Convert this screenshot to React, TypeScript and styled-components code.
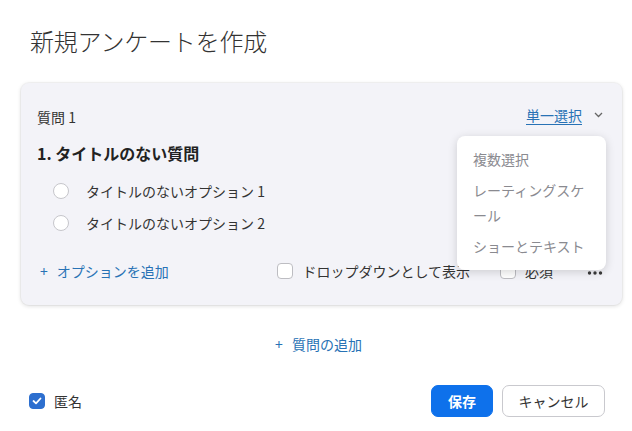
import React from "react";
import styled, { createGlobalStyle } from "styled-components";

const Global = createGlobalStyle`
  html, body { margin: 0; padding: 0; background: #fff; }
  body {
    font-family: "Noto Sans CJK JP", "Noto Sans", sans-serif;
    color: #232333;
    -webkit-font-smoothing: antialiased;
  }
  * { box-sizing: border-box; }
`;

const Page = styled.div`
  width: 632px;
  height: 431px;
  display: flex;
  flex-direction: column;
  overflow: hidden;
`;

const Title = styled.h1`
  margin: 24px 0 0 30px;
  font-size: 24px;
  line-height: 34px;
  font-weight: 300;
  color: #333;
  letter-spacing: -0.2px;
`;

const Card = styled.section`
  position: relative;
  margin: 25px 10px 0 21px;
  height: 222px;
  background: #f3f3f8;
  border-radius: 8px;
  box-shadow: 0 1px 4px rgba(0, 0, 0, 0.14), 0 0 0 1px rgba(0, 0, 0, 0.03);
  padding: 24px 19px 22px 16px;
  display: flex;
  flex-direction: column;
`;

const HeaderRow = styled.div`
  display: flex;
  align-items: center;
  justify-content: space-between;
  height: 20px;
`;

const Label = styled.span`
  font-size: 14px;
  line-height: 20px;
  color: #333;
`;

const TypeLink = styled.button`
  all: unset;
  display: flex;
  align-items: center;
  gap: 12px;
  margin-top: -4px;
  cursor: pointer;
`;

const TypeText = styled.span`
  font-size: 14px;
  line-height: 20px;
  color: #2872b5;
  text-decoration: underline;
  text-underline-offset: 3px;
`;

const QuestionTitle = styled.h2`
  margin: 14px 0 0;
  font-size: 16px;
  line-height: 24px;
  font-weight: 700;
  color: #222;
`;

const Options = styled.ul`
  list-style: none;
  margin: 10px 0 0;
  padding: 0 0 0 16px;
`;

const OptionRow = styled.li`
  display: flex;
  align-items: center;
  height: 32px;
  gap: 17px;
`;

const Radio = styled.span`
  width: 16px;
  height: 16px;
  border-radius: 50%;
  border: 1px solid #c6c6cb;
  background: #fff;
  flex: none;
`;

const OptionText = styled.span`
  font-size: 14px;
  color: #333;
`;

const FooterRow = styled.div`
  display: flex;
  align-items: center;
  margin-top: 20px;
  height: 24px;
`;

const AddLink = styled.button<{ $center?: boolean }>`
  all: unset;
  display: flex;
  align-items: center;
  flex: ${(p) => (p.$center ? "none" : "1")};
  font-size: 14px;
  line-height: 20px;
  color: #2872b5;
  cursor: pointer;
  white-space: nowrap;
`;

const Plus = styled.span`
  margin: 0 9px 0 3px;
`;

const CheckLabel = styled.label<{ $gapAfter?: number }>`
  display: flex;
  align-items: center;
  gap: 9px;
  margin-right: ${(p) => p.$gapAfter ?? 0}px;
  font-size: 14px;
  color: #333;
`;

const Box = styled.span<{ $checked?: boolean }>`
  width: 16px;
  height: 16px;
  border-radius: 4px;
  flex: none;
  display: flex;
  align-items: center;
  justify-content: center;
  border: 1px solid ${(p) => (p.$checked ? "#2d6fcf" : "#bdbdc2")};
  background: ${(p) => (p.$checked ? "#2d6fcf" : "#fff")};
`;

const MoreButton = styled.button`
  all: unset;
  display: flex;
  align-items: center;
  width: 16px;
  height: 10px;
  margin-top: 3px;
`;

const Menu = styled.ul`
  position: absolute;
  top: 53px;
  left: 436px;
  width: 149px;
  margin: 0;
  padding: 8px 0;
  list-style: none;
  background: #fff;
  border-radius: 8px;
  box-shadow: 0 2px 10px rgba(0, 0, 0, 0.16);
  z-index: 5;
`;

const MenuItem = styled.li`
  padding: 3px 16px;
  font-size: 14px;
  line-height: 25px;
  color: #8a8a90;
  line-break: loose;
  word-break: break-all;
`;

const AddQuestion = styled.div`
  display: flex;
  justify-content: center;
  margin-top: 29px;
  padding-left: 2px;
`;

const Footer = styled.footer`
  display: flex;
  align-items: center;
  margin-top: 31px;
  padding: 0 27px 0 29px;
  height: 32px;
`;

const Spacer = styled.div`
  flex: 1;
`;

const Button = styled.button<{ $primary?: boolean }>`
  height: 32px;
  padding: 0 ${(p) => (p.$primary ? 16 : 15)}px;
  min-width: ${(p) => (p.$primary ? 61 : 103)}px;
  border-radius: 7px;
  font-family: inherit;
  font-size: 14px;
  font-weight: ${(p) => (p.$primary ? 700 : 400)};
  color: ${(p) => (p.$primary ? "#fff" : "#333")};
  background: ${(p) => (p.$primary ? "#0e71eb" : "#fff")};
  border: 1px solid ${(p) => (p.$primary ? "#0e71eb" : "#c9c9ce")};
  margin-left: ${(p) => (p.$primary ? 0 : 9)}px;
`;

const Chevron = () => (
  <svg width="9" height="6" viewBox="0 0 9 6">
    <polyline points="1,1 4.5,4.5 8,1" fill="none" stroke="#666" strokeWidth="1.3" />
  </svg>
);

const Dots = () => (
  <svg width="16" height="6" viewBox="0 0 16 6">
    <circle cx="2.5" cy="3" r="1.7" fill="#3a3a3a" />
    <circle cx="8" cy="3" r="1.7" fill="#3a3a3a" />
    <circle cx="13.5" cy="3" r="1.7" fill="#3a3a3a" />
  </svg>
);

const Check = () => (
  <svg width="10" height="8" viewBox="0 0 10 8">
    <polyline points="1.5,4 4,6.3 8.5,1.5" fill="none" stroke="#fff" strokeWidth="1.8" strokeLinecap="round" strokeLinejoin="round" />
  </svg>
);

export default function App() {
  const options = ["タイトルのないオプション 1", "タイトルのないオプション 2"];
  const menu = ["複数選択", "レーティングスケール", "ショーとテキスト"];
  return (
    <Page>
      <Global />
      <Title>新規アンケートを作成</Title>
      <Card>
        <HeaderRow>
          <Label>質問 1</Label>
          <TypeLink>
            <TypeText>単一選択</TypeText>
            <Chevron />
          </TypeLink>
        </HeaderRow>
        <QuestionTitle>1.&nbsp;タイトルのない質問</QuestionTitle>
        <Options>
          {options.map((o) => (
            <OptionRow key={o}>
              <Radio />
              <OptionText>{o}</OptionText>
            </OptionRow>
          ))}
        </Options>
        <FooterRow>
          <AddLink>
            <Plus>+</Plus>オプションを追加
          </AddLink>
          <CheckLabel $gapAfter={30}>
            <Box />
            ドロップダウンとして表示
          </CheckLabel>
          <CheckLabel $gapAfter={34}>
            <Box />
            必須
          </CheckLabel>
          <MoreButton>
            <Dots />
          </MoreButton>
        </FooterRow>
        <Menu>
          {menu.map((m) => (
            <MenuItem key={m}>{m}</MenuItem>
          ))}
        </Menu>
      </Card>
      <AddQuestion>
        <AddLink $center>
          <Plus>+</Plus>質問の追加
        </AddLink>
      </AddQuestion>
      <Footer>
        <CheckLabel>
          <Box $checked>
            <Check />
          </Box>
          匿名
        </CheckLabel>
        <Spacer />
        <Button $primary>保存</Button>
        <Button>キャンセル</Button>
      </Footer>
    </Page>
  );
}
